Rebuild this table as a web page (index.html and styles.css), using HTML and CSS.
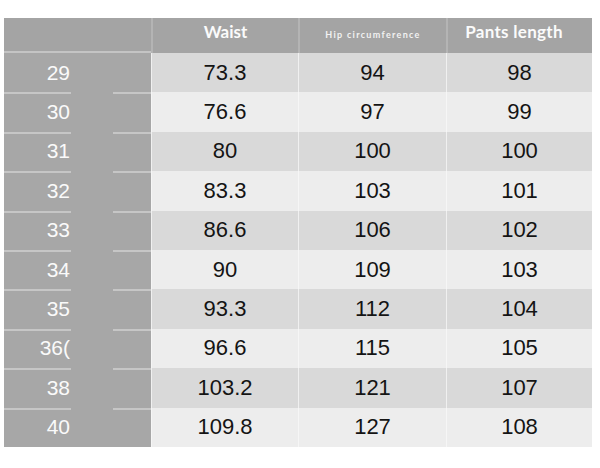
FILE: index.html
```html
<!DOCTYPE html>
<html>
<head>
<meta charset="utf-8">
<link rel="stylesheet" href="styles.css">
</head>
<body>
<div class="sheet">
  <div class="hd hd-first"></div>
  <div class="hd"><span class="hd-big">Waist</span></div>
  <div class="hd"><span class="hd-small">Hip circumference</span></div>
  <div class="hd hd-last"><span class="hd-big pants">Pants length</span></div>

  <div class="lbl first">29</div><div class="cell odd">73.3</div><div class="cell odd">94</div><div class="cell odd">98</div>
  <div class="lbl">30</div><div class="cell even">76.6</div><div class="cell even">97</div><div class="cell even">99</div>
  <div class="lbl">31</div><div class="cell odd">80</div><div class="cell odd">100</div><div class="cell odd">100</div>
  <div class="lbl">32</div><div class="cell even">83.3</div><div class="cell even">103</div><div class="cell even">101</div>
  <div class="lbl">33</div><div class="cell odd">86.6</div><div class="cell odd">106</div><div class="cell odd">102</div>
  <div class="lbl">34</div><div class="cell even">90</div><div class="cell even">109</div><div class="cell even">103</div>
  <div class="lbl">35</div><div class="cell odd">93.3</div><div class="cell odd">112</div><div class="cell odd">104</div>
  <div class="lbl">36(</div><div class="cell even">96.6</div><div class="cell even">115</div><div class="cell even">105</div>
  <div class="lbl">38</div><div class="cell odd">103.2</div><div class="cell odd">121</div><div class="cell odd">107</div>
  <div class="lbl">40</div><div class="cell even">109.8</div><div class="cell even">127</div><div class="cell even">108</div>
</div>
</body>
</html>
```

FILE: styles.css
```css
html, body {
  margin: 0;
  padding: 0;
  background: #ffffff;
}

.sheet {
  margin: 18px 0 0 4px;
  width: 588px;
  display: grid;
  grid-template-columns: 147px 147px 148px 146px;
  grid-template-rows: 35px repeat(10, 39.4px);
}

.hd {
  background: #a4a4a4;
  border-left: 2px solid #b4b4b4;
  display: flex;
  justify-content: center;
  align-items: flex-start;
  padding-top: 4px;
  box-sizing: border-box;
  color: #fbfbfb;
  font-family: Lato, "Open Sans", sans-serif;
  font-weight: 700;
}

.hd-first {
  border-left: none;
  border-bottom: 2px solid #c4c4c4;
}

.hd-big {
  font-size: 17px;
  line-height: 20px;
}

.pants {
  margin-right: 12px;
  letter-spacing: 0.3px;
}

.hd-small {
  font-size: 9px;
  line-height: 12px;
  margin-top: 7px;
  letter-spacing: 1.3px;
  font-weight: 700;
  color: #f2f2f2;
}

.lbl {
  background-color: #a7a7a7;
  color: #fafafa;
  font-family: "Liberation Sans", Arial, sans-serif;
  font-size: 21px;
  text-align: right;
  padding-right: 81px;
  display: flex;
  align-items: center;
  justify-content: flex-end;
  box-sizing: border-box;
  background-image: linear-gradient(to right, #c6c6c6 0, #c6c6c6 67px, transparent 67px, transparent 109px, #c6c6c6 109px);
  background-size: 100% 2px;
  background-repeat: no-repeat;
  background-position: top left;
}

.lbl.first {
  background-image: none;
}

.cell {
  font-family: "Liberation Sans", Arial, sans-serif;
  font-size: 22px;
  color: #141414;
  display: flex;
  align-items: center;
  justify-content: center;
  border-left: 1px solid #f0f0f0;
  box-sizing: border-box;
}

.odd {
  background: #d9d9d9;
}

.even {
  background: #ededed;
  border-left-color: #f6f6f6;
}
```
